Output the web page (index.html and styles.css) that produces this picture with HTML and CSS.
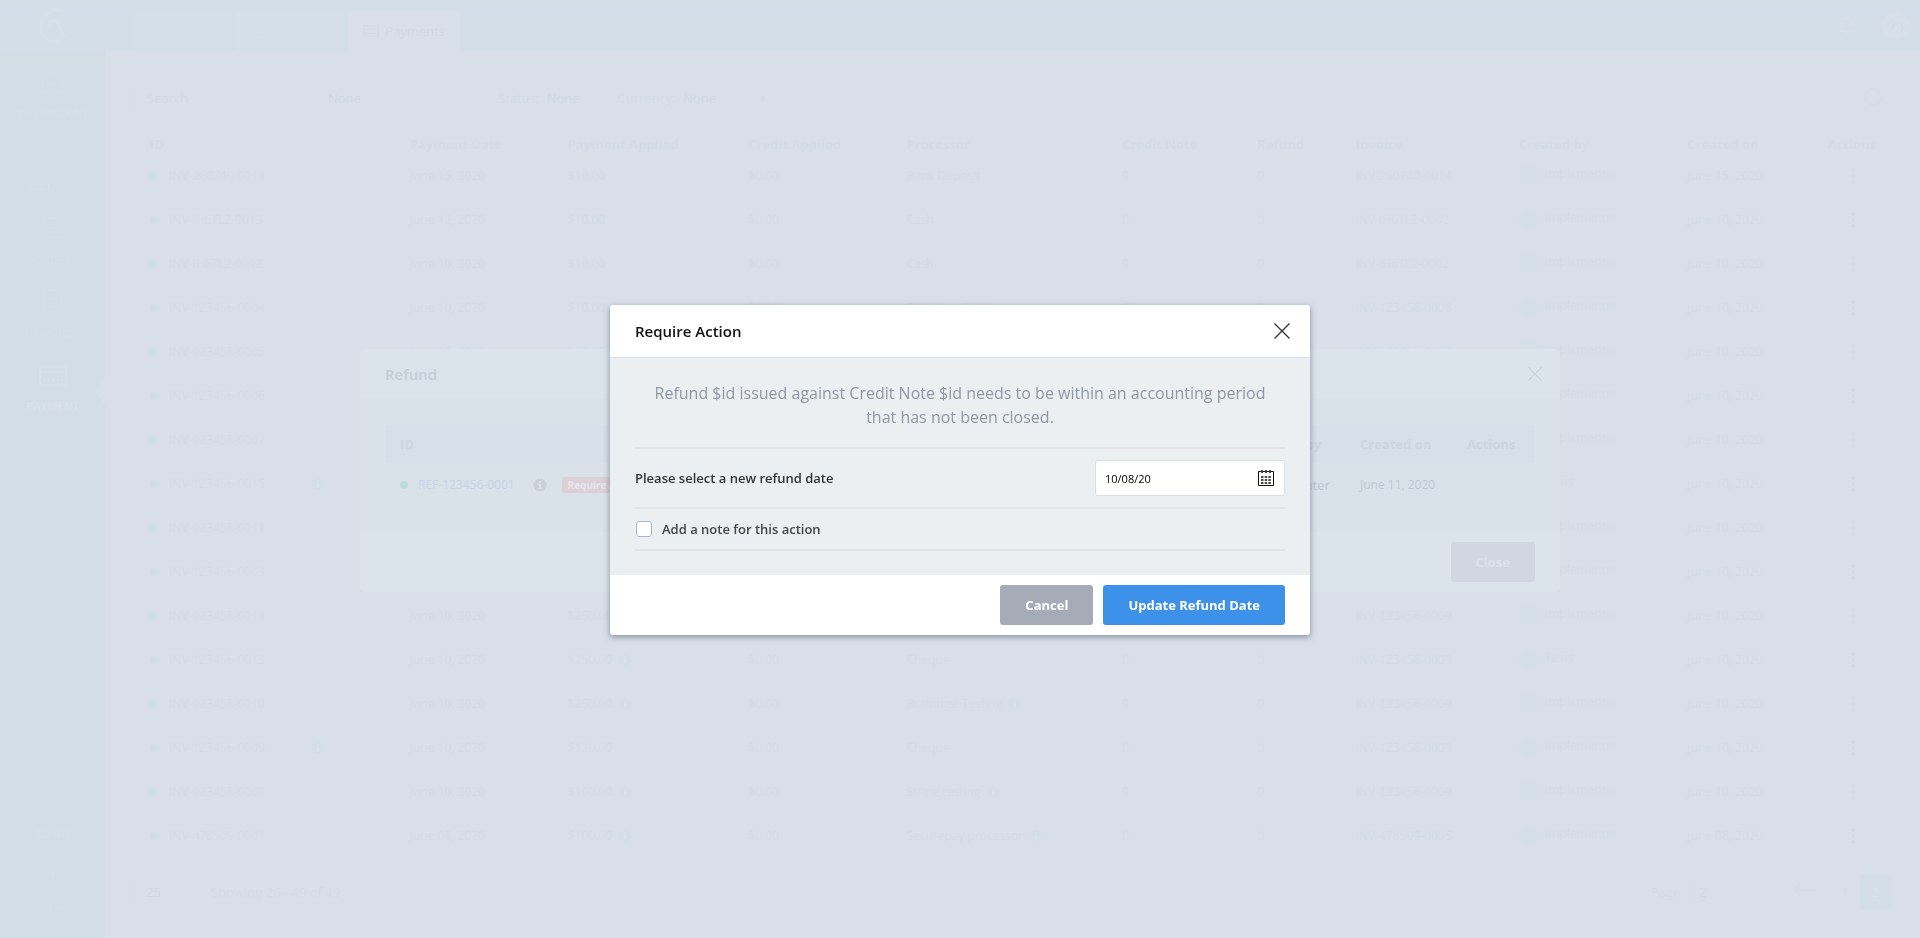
FILE: index.html
```html
<!DOCTYPE html>
<html lang="en">
<head>
  <meta charset="UTF-8">
  <title>Payments</title>
  <link rel="stylesheet" href="styles.css">
</head>
<body>
  <!-- Shared icons -->
  <svg class="sprite">
    <symbol id="info" viewBox="0 0 14 14">
      <circle cx="7" cy="7" r="6.5" fill="currentColor"/>
      <path class="cutout" d="M6 2.8h2.2v1.9H6zM5.1 5.7h3.1v4h.9v1.2H5.1V9.7H6V6.9h-.9z"/>
    </symbol>
    <symbol id="card" viewBox="0 0 28 20">
      <path d="M1 1h26v18H1zM1 6.500h26M4 14.500h20" fill="none" stroke="currentColor" stroke-width="1.500"/>
    </symbol>
    <symbol id="cross" viewBox="0 0 16 16">
      <path d="M.5.5l15 15M15.500.5l-15 15" fill="none" stroke="currentColor" stroke-width="1.300"/>
    </symbol>
    <symbol id="dots" viewBox="0 0 4 16">
      <circle cx="2" cy="2" r="1.200" fill="currentColor"/>
      <circle cx="2" cy="8" r="1.200" fill="currentColor"/>
      <circle cx="2" cy="14" r="1.200" fill="currentColor"/>
    </symbol>
  </svg>

  <div class="app">
    <header class="topbar">
      <a class="logo" href="#" aria-label="Home">
        <svg width="28" height="34" viewBox="0 0 28 34" fill="none" stroke="currentColor" stroke-width="2.500">
          <path d="M25 4C19-1 10 1 5 8 0 15 1 25 7 30c5 4 11 3 15 0M9 17c4-6 7-7 9-4l8 15"/>
        </svg>
      </a>
      <nav class="tabs">
        <a class="tab" href="#">
          <svg width="16" height="16" viewBox="0 0 16 16" fill="none" stroke="currentColor"><circle cx="8" cy="5" r="3"/><path d="M2 15c0-7 12-7 12 0"/></svg>
          C59107
        </a>
        <a class="tab" href="#">
          <svg width="16" height="16" viewBox="0 0 16 16" fill="none" stroke="currentColor"><path d="M3 1h7l3 3v11H3zM5 7h6M5 10h6"/></svg>
          S-123456
        </a>
        <a class="tab active" href="#">
          <svg width="16" height="12"><use href="#card"/></svg>
          Payments
        </a>
      </nav>
      <div class="top-actions">
        <svg width="18" height="20" viewBox="0 0 18 20" fill="none" stroke="currentColor" stroke-width="1.500">
          <path d="M1 15c3-2 2-6 3-9 2-5 8-5 10 0 1 3 0 7 3 9zM7 18h4"/>
        </svg>
        <svg width="30" height="30" viewBox="0 0 30 30">
          <circle cx="15" cy="15" r="14" fill="currentColor"/>
          <path d="M7 15l5-6 4 3-5 5M20 12l3 5-3 5" fill="none" stroke="#d2dce5" stroke-width="1.500"/>
        </svg>
      </div>
    </header>

    <div class="workspace">
      <aside class="sidebar">
        <a class="nav-item" href="#">
          <svg width="24" height="24" viewBox="0 0 24 24" fill="none" stroke="currentColor"><path d="M2 22V8l10-6 10 6v14h-7v-8H9v8z"/></svg>
          DASHBOARD
        </a>
        <a class="nav-item" href="#">
          <svg width="24" height="24" viewBox="0 0 24 24" fill="none" stroke="currentColor"><circle cx="12" cy="7" r="5"/><path d="M2 23c1-11 19-11 20 0"/></svg>
          ACCOUNT
        </a>
        <a class="nav-item" href="#">
          <svg width="24" height="24" viewBox="0 0 24 24" fill="none" stroke="currentColor"><path d="M3 2h18v6l-4 4H7L3 8zM3 16h18M4 21h16"/></svg>
          ORDER
        </a>
        <a class="nav-item" href="#">
          <svg width="24" height="24" viewBox="0 0 24 24" fill="none" stroke="currentColor"><path d="M3 1h13l5 5v17H3zM7 10h10M7 14h10M7 18h10"/></svg>
          INVOICE
        </a>
        <a class="nav-item current" href="#">
          <svg width="28" height="20" viewBox="0 0 28 20" fill="none" stroke="currentColor" stroke-width="1.500"><path d="M1 1h26v18H1zM1 6h26"/><path d="M4 14h20" stroke-width="2" stroke-dasharray="3 1.500"/></svg>
          PAYMENT
        </a>
        <a class="nav-item push" href="#">
          <svg width="24" height="24" viewBox="0 0 24 24"></svg>
          TO DO
        </a>
        <a class="nav-item" href="#">
          <svg width="26" height="26" viewBox="0 0 26 26" fill="none" stroke="currentColor"><circle cx="13" cy="13" r="12"/><path d="M13 7v12M7 13h12"/></svg>
          NEW
        </a>
      </aside>

      <main class="content">
        <div class="filters">
          <input class="filter search" type="text" placeholder="Search" aria-label="Search">
          <button class="filter wide"><b>None</b></button>
          <button class="filter">Status: <b>None</b></button>
          <button class="filter">Currency: <b>None</b></button>
          <button class="filter plus" aria-label="Add filter">+</button>
          <button class="refresh" aria-label="Refresh">
            <svg width="18" height="18" viewBox="0 0 18 18" fill="none" stroke="currentColor"><path d="M16 6a8 8 0 1 0 1 4M16 2v4h-4"/></svg>
          </button>
        </div>

        <table class="payments">
          <colgroup>
            <col class="c-id"><col class="c-date"><col class="c-amount"><col class="c-credit"><col class="c-processor"><col class="c-note">
            <col class="c-refund"><col class="c-invoice"><col class="c-by"><col class="c-on"><col class="c-actions">
          </colgroup>
          <thead>
            <tr><th>ID</th><th>Payment Date</th><th>Payment Applied</th><th>Credit Applied</th><th>Processor</th><th>Credit Note</th><th>Refund</th><th>Invoice</th><th>Created by</th><th>Created on</th><th>Actions</th></tr>
          </thead>
          <tbody>
            <tr><td><i class="dot"></i>INV-260740-0014</td><td>June 15, 2020</td><td>$10.00</td><td>$0.00</td><td>Bank Deposit</td><td>0</td><td>0</td><td>INV-260740-0014</td><td><i class="avatar"></i>Implementer</td><td>June 15, 2020</td><td class="menu"><svg width="4" height="16"><use href="#dots"/></svg></td></tr>
            <tr><td><i class="dot"></i>INV-IH6TL2-0013</td><td>June 12, 2020</td><td>$10.00</td><td>$0.00</td><td>Cash</td><td>0</td><td>0</td><td>INV-IH6TL2-0002</td><td><i class="avatar"></i>Implementer</td><td>June 10, 2020</td><td class="menu"><svg width="4" height="16"><use href="#dots"/></svg></td></tr>
            <tr><td><i class="dot"></i>INV-IH6TL2-0012</td><td>June 10, 2020</td><td>$10.00</td><td>$0.00</td><td>Cash</td><td>0</td><td>0</td><td>INV-IH6TL2-0002</td><td><i class="avatar"></i>Implementer</td><td>June 10, 2020</td><td class="menu"><svg width="4" height="16"><use href="#dots"/></svg></td></tr>
            <tr><td><i class="dot"></i>INV-123456-0004</td><td>June 10, 2020</td><td>$10.00</td><td>$0.00</td><td>Braintree Testing</td><td>0</td><td>0</td><td>INV-123456-0008</td><td><i class="avatar"></i>Implementer</td><td>June 10, 2020</td><td class="menu"><svg width="4" height="16"><use href="#dots"/></svg></td></tr>
            <tr><td><i class="dot"></i>INV-123456-0005</td><td>June 10, 2020</td><td>$10.00</td><td>$0.00</td><td>Cash</td><td>0</td><td>0</td><td>INV-123456-0008</td><td><i class="avatar"></i>Implementer</td><td>June 10, 2020</td><td class="menu"><svg width="4" height="16"><use href="#dots"/></svg></td></tr>
            <tr><td><i class="dot"></i>INV-123456-0006</td><td>June 10, 2020</td><td>$10.00</td><td>$0.00</td><td>Cash</td><td>0</td><td>0</td><td>INV-123456-0008</td><td><i class="avatar"></i>Implementer</td><td>June 10, 2020</td><td class="menu"><svg width="4" height="16"><use href="#dots"/></svg></td></tr>
            <tr><td><i class="dot"></i>INV-123456-0007</td><td>June 10, 2020</td><td>$10.00</td><td>$0.00</td><td>Cash</td><td>0</td><td>0</td><td>INV-123456-0008</td><td><i class="avatar"></i>Implementer</td><td>June 10, 2020</td><td class="menu"><svg width="4" height="16"><use href="#dots"/></svg></td></tr>
            <tr><td><i class="dot"></i>INV-123456-0015<svg class="hint far" width="12" height="12"><use href="#info"/></svg></td><td>June 10, 2020</td><td>$250.00</td><td>$0.00</td><td>Cash</td><td>0</td><td>0</td><td>INV-123456-0009</td><td><i class="avatar"></i>Tests</td><td>June 10, 2020</td><td class="menu"><svg width="4" height="16"><use href="#dots"/></svg></td></tr>
            <tr><td><i class="dot"></i>INV-123456-0011</td><td>June 10, 2020</td><td>$250.00</td><td>$0.00</td><td>Cheque</td><td>0</td><td>0</td><td>INV-123456-0009</td><td><i class="avatar"></i>Implementer</td><td>June 10, 2020</td><td class="menu"><svg width="4" height="16"><use href="#dots"/></svg></td></tr>
            <tr><td><i class="dot"></i>INV-123456-0003</td><td>June 10, 2020</td><td>$250.00</td><td>$0.00</td><td>Cheque</td><td>0</td><td>0</td><td>INV-123456-0009</td><td><i class="avatar"></i>Implementer</td><td>June 10, 2020</td><td class="menu"><svg width="4" height="16"><use href="#dots"/></svg></td></tr>
            <tr><td><i class="dot"></i>INV-123456-0014</td><td>June 10, 2020</td><td>$250.00</td><td>$0.00</td><td>Cheque</td><td>0</td><td>0</td><td>INV-123456-0009</td><td><i class="avatar"></i>Implementer</td><td>June 10, 2020</td><td class="menu"><svg width="4" height="16"><use href="#dots"/></svg></td></tr>
            <tr><td><i class="dot"></i>INV-123456-0013</td><td>June 10, 2020</td><td>$250.00<svg class="hint" width="12" height="12"><use href="#info"/></svg></td><td>$0.00</td><td>Cheque</td><td>0</td><td>0</td><td>INV-123456-0009</td><td><i class="avatar"></i>Tests</td><td>June 10, 2020</td><td class="menu"><svg width="4" height="16"><use href="#dots"/></svg></td></tr>
            <tr><td><i class="dot"></i>INV-123456-0010</td><td>June 10, 2020</td><td>$250.00<svg class="hint" width="12" height="12"><use href="#info"/></svg></td><td>$0.00</td><td>Braintree Testing<svg class="hint" width="12" height="12"><use href="#info"/></svg></td><td>0</td><td>0</td><td>INV-123456-0009</td><td><i class="avatar"></i>Implementer</td><td>June 10, 2020</td><td class="menu"><svg width="4" height="16"><use href="#dots"/></svg></td></tr>
            <tr><td><i class="dot"></i>INV-123456-0009<svg class="hint far" width="12" height="12"><use href="#info"/></svg></td><td>June 10, 2020</td><td>$120.00</td><td>$0.00</td><td>Cheque</td><td>0</td><td>0</td><td>INV-123456-0009</td><td><i class="avatar"></i>Implementer</td><td>June 10, 2020</td><td class="menu"><svg width="4" height="16"><use href="#dots"/></svg></td></tr>
            <tr><td><i class="dot"></i>INV-123456-0008</td><td>June 10, 2020</td><td>$100.00<svg class="hint" width="12" height="12"><use href="#info"/></svg></td><td>$0.00</td><td>Stripe testing<svg class="hint" width="12" height="12"><use href="#info"/></svg></td><td>0</td><td>0</td><td>INV-123456-0009</td><td><i class="avatar"></i>Implementer</td><td>June 10, 2020</td><td class="menu"><svg width="4" height="16"><use href="#dots"/></svg></td></tr>
            <tr><td><i class="dot"></i>INV-478509-0001</td><td>June 08, 2020</td><td>$100.00<svg class="hint" width="12" height="12"><use href="#info"/></svg></td><td>$0.00</td><td>Securepay processor<svg class="hint" width="12" height="12"><use href="#info"/></svg></td><td>0</td><td>0</td><td>INV-478509-0005</td><td><i class="avatar"></i>Implementer</td><td>June 08, 2020</td><td class="menu"><svg width="4" height="16"><use href="#dots"/></svg></td></tr>
          </tbody>
        </table>

        <div class="pager">
          <select class="page-select" aria-label="Rows per page"><option>25</option></select>
          <span>Showing 26 - 49 of 49</span>
          <label class="push-right" for="page">Page</label>
          <select class="page-select" id="page"><option>2</option></select>
          <div class="page-links">
            <button class="page-btn arrow" aria-label="Previous page">
              <svg width="24" height="16" viewBox="0 0 24 16" fill="none" stroke="currentColor"><path d="M24 8H1M8 1L1 8l7 7"/></svg>
            </button>
            <button class="page-btn">1</button>
            <button class="page-btn on">2</button>
          </div>
        </div>
      </main>
    </div>
  </div>

  <!-- Refund dialog, behind the active one -->
  <div class="overlay">
    <section class="refund">
      <header class="refund-head">
        <h2>Refund</h2>
        <button class="close-x" aria-label="Close refund"><svg width="14" height="14"><use href="#cross"/></svg></button>
      </header>
      <div class="refund-body">
        <table class="refund-table">
          <colgroup><col><col class="r-by"><col class="r-on"><col class="r-actions"></colgroup>
          <thead>
            <tr><th>ID</th><th>Created by</th><th>Created on</th><th>Actions</th></tr>
          </thead>
          <tbody>
            <tr>
              <td>
                <div class="refund-id">
                  <i class="dot"></i>
                  <a href="#">REF-123456-0001</a>
                  <svg class="refund-info" width="14" height="14"><use href="#info"/></svg>
                  <span class="badge">Require Action</span>
                </div>
              </td>
              <td class="creator">Implementer</td>
              <td>June 11, 2020</td>
              <td></td>
            </tr>
          </tbody>
        </table>
      </div>
      <footer class="refund-foot">
        <button class="btn btn-close">Close</button>
      </footer>
    </section>
  </div>

  <!-- Active dialog -->
  <div class="overlay">
    <section class="modal" role="dialog" aria-labelledby="modalTitle">
      <header class="modal-head">
        <h2 id="modalTitle">Require Action</h2>
        <button class="close-x" aria-label="Close"><svg width="16" height="16"><use href="#cross"/></svg></button>
      </header>
      <div class="modal-body">
        <p class="message">Refund $id issued against Credit Note $id needs to be within an accounting period that has not been closed.</p>
        <div class="row date-row">
          <label for="refundDate">Please select a new refund date</label>
          <div class="date-box">
            <input id="refundDate" type="text" value="10/08/20">
            <svg width="16" height="16" viewBox="0 0 16 16">
              <path d="M.5 1.500h15v14H.5z" fill="none" stroke="#111" stroke-linejoin="round"/>
              <path d="M4 0v3M8 0v3M12 0v3" stroke="#444" stroke-width="2"/>
              <path d="M3 7h10M3 10h10M3 13h10" stroke="#111" stroke-width="1.500" stroke-dasharray="2.500 1.200"/>
            </svg>
          </div>
        </div>
        <div class="row note-row">
          <input id="addNote" type="checkbox">
          <label for="addNote">Add a note for this action</label>
        </div>
      </div>
      <footer class="modal-foot">
        <button class="btn btn-cancel">Cancel</button>
        <button class="btn btn-update">Update Refund Date</button>
      </footer>
    </section>
  </div>
</body>
</html>
```

FILE: styles.css
```css
* {
  box-sizing: border-box;
}

body {
  margin: 0;
  font-family: "Open Sans", "Noto Sans", sans-serif;
  font-size: 13px;
  color: #d3dce6;
  background-color: #d8dfe9;
}

a {
  color: inherit;
  text-decoration: none;
}

button,
input,
select {
  font: inherit;
  color: inherit;
}

h2 {
  margin: 0;
  font-size: 15px;
  font-weight: 600;
}

.sprite {
  display: none;
}

/* Page behind the dialogs */
.app {
  min-height: 100vh;
  display: flex;
  flex-direction: column;
}

.topbar {
  height: 51px;
  display: flex;
  background-color: #d4dee8;
  border-top: 1px solid #d4dfe4;
}

.logo {
  width: 105px;
  display: flex;
  align-items: center;
  justify-content: center;
  color: #d7e0e9;
}

.tabs {
  display: flex;
  align-items: flex-end;
  gap: 4px;
  padding-left: 30px;
}

.tab {
  height: 40px;
  display: flex;
  align-items: center;
  gap: 6px;
  padding: 0 15px;
  border-radius: 3px 3px 0 0;
  background-color: #d4dfe8;
  color: #d6e0e9;
}

.tab.active {
  background-color: #d8dfe9;
  color: #d0dae3;
}

.top-actions {
  margin-left: auto;
  display: flex;
  align-items: center;
  gap: 24px;
  padding-right: 10px;
  color: #d7dfe9;
}

.workspace {
  flex: 1;
  display: flex;
}

.sidebar {
  width: 105px;
  display: flex;
  flex-direction: column;
  padding: 10px 0 11px;
  background-color: #d3dde6;
}

.nav-item {
  position: relative;
  height: 73px;
  display: flex;
  flex-direction: column;
  align-items: center;
  justify-content: flex-end;
  gap: 12px;
  padding-bottom: 12px;
  font-size: 11px;
  font-weight: 700;
  line-height: 16px;
  color: #d5dfe7;
}

.nav-item.current {
  color: #d8e1ea;
}

.nav-item.current::after {
  content: "";
  position: absolute;
  right: 0;
  top: 24px;
  border: 14px solid transparent;
  border-left-width: 0;
  border-right: 10px solid #d8dfe9;
}

.push {
  margin-top: auto;
}

.content {
  flex: 1;
  display: flex;
  flex-direction: column;
  padding: 32px 30px 28px;
}

.filters {
  display: flex;
  gap: 6px;
  padding-bottom: 22px;
}

.filter {
  height: 30px;
  padding: 0 6px;
  border: 1px solid #d6dee8;
  border-bottom-color: #dae1ea;
  background-color: transparent;
  text-align: left;
}

.filter::placeholder {
  color: #d2dbe5;
  opacity: 1;
}

.filter b {
  font-weight: 400;
  color: #d0dae3;
  padding: 0 18px 0 4px;
}

.search {
  width: 164px;
  padding-left: 11px;
}

.wide {
  width: 180px;
  padding-left: 18px;
}

.plus {
  padding-left: 11px;
}

.refresh {
  margin-left: auto;
  padding: 0 8px;
  border: 0;
  background: none;
}

.payments {
  width: 100%;
  table-layout: fixed;
  border-collapse: collapse;
}

.payments th,
.payments td {
  padding: 0 0 0 15px;
  text-align: left;
  white-space: nowrap;
}

.payments th {
  height: 18px;
  line-height: 18px;
  font-weight: 700;
}

.payments td {
  height: 44px;
  font-size: 12px;
}

.payments .menu {
  padding-left: 38px;
}

.payments td svg,
.payments td i {
  vertical-align: middle;
}

.c-id { width: 14.8%; }
.c-date { width: 9%; }
.c-amount { width: 10.3%; }
.c-credit { width: 9%; }
.c-processor { width: 12.3%; }
.c-note { width: 7.7%; }
.c-refund { width: 5.6%; }
.c-invoice { width: 9.3%; }
.c-by { width: 9.6%; }
.c-on { width: 8%; }
.c-actions { width: 4.4%; }

.dot {
  display: inline-block;
  width: 8px;
  height: 8px;
  margin-right: 11px;
  border-radius: 50%;
  background-color: #cedfe7;
}

.avatar {
  display: inline-block;
  width: 20px;
  height: 20px;
  margin-right: 6px;
  border-radius: 50%;
  background-color: #d4dfe8;
}

.hint {
  margin-left: 7px;
  color: #d4dee8;
}

.hint.far {
  margin-left: 47px;
}

.cutout {
  fill: #dbe3ea;
}

.pager {
  display: flex;
  align-items: center;
  gap: 8px;
  margin-top: auto;
}

.page-select {
  width: 68px;
  height: 36px;
  padding: 0 10px;
  appearance: none;
  border: 1px solid #d6dfe9;
  background-color: transparent;
  color: #d0dae3;
}

.push-right {
  margin-left: auto;
}

.page-links {
  display: flex;
  margin-left: 16px;
}

.page-btn {
  width: 30px;
  height: 36px;
  padding: 0;
  border: 0;
  border-radius: 3px;
  background: none;
}

.page-btn.arrow {
  width: 50px;
}

.page-btn.on {
  background-color: #d3dee8;
  color: #d9e2eb;
}

/* Dialog layers */
.overlay {
  position: fixed;
  inset: 2px 0 0;
  display: flex;
  align-items: center;
  justify-content: center;
}

.close-x {
  display: flex;
  padding: 0;
  border: 0;
  background: none;
  cursor: pointer;
}

.btn {
  height: 40px;
  padding: 0 25px;
  border: 0;
  border-radius: 3px;
  font-weight: 700;
  color: #fff;
  cursor: pointer;
}

/* Refund dialog */
.refund {
  width: 1200px;
  max-width: 100%;
  border-radius: 4px;
  background-color: #dbe3eb;
}

.refund-head {
  height: 51px;
  display: flex;
  align-items: center;
  justify-content: space-between;
  padding: 0 18px 0 25px;
  border-bottom: 1px solid #d8e0e8;
  color: #cbd3dc;
}

.refund-head h2 {
  color: #c5cdd6;
}

.refund-body {
  padding: 25px;
  background-color: #d9e1e9;
}

.refund-table {
  width: 100%;
  table-layout: fixed;
  border-collapse: collapse;
}

.refund-table th,
.refund-table td {
  padding: 0 15px;
  text-align: left;
}

.refund-table th {
  height: 38px;
  background-color: #d7dfe9;
  font-weight: 700;
  color: #ced6e0;
}

.refund-table td {
  height: 44px;
  font-size: 12px;
  color: #c0c9d2;
}

.refund-table .creator {
  font-size: 13px;
}

.refund-id {
  display: flex;
  align-items: center;
}

.refund-id .dot {
  margin-right: 10px;
  background-color: #bcdddb;
}

.refund-id a {
  color: #c2d5e9;
}

.refund-info {
  margin: 0 15px 0 18px;
  color: #c9d0d8;
}

.badge {
  padding: 0 6px;
  border-radius: 3px;
  background-color: #dccfd6;
  color: #e3e7ed;
  font-size: 10px;
  font-weight: 700;
  line-height: 16px;
}

.r-by { width: 109px; }
.r-on { width: 107px; }
.r-actions { width: 83px; }

.refund-foot {
  display: flex;
  justify-content: flex-end;
  padding: 10px 25px;
}

.btn-close {
  background-color: #d0d7e1;
  color: #dbe2ea;
}

/* Require Action dialog */
.modal {
  width: 700px;
  max-width: 100%;
  border-radius: 3px;
  background-color: #fff;
  box-shadow: 0 2px 6px rgba(50, 65, 80, 0.5);
}

.modal-head {
  height: 53px;
  display: flex;
  align-items: center;
  justify-content: space-between;
  padding: 0 20px 0 25px;
  border-bottom: 1px solid #dce0e5;
  color: #333;
}

.modal-head h2 {
  color: #111;
}

.modal-body {
  padding: 23px 25px 24px;
  background-color: #ebeff2;
}

.message {
  margin: 0;
  padding: 0 10px 18px;
  border-bottom: 2px solid #e1e5e7;
  font-size: 16px;
  line-height: 24px;
  text-align: center;
  color: #8f98a4;
}

.row {
  display: flex;
  align-items: center;
  border-bottom: 2px solid #e1e5e7;
  font-weight: 600;
  color: #333;
}

.date-row {
  justify-content: space-between;
  height: 60px;
}

.date-box {
  width: 190px;
  height: 36px;
  display: flex;
  align-items: center;
  padding: 0 10px 0 9px;
  border: 1px solid #dcdfe3;
  border-radius: 3px;
  background-color: #fff;
}

.date-box input {
  flex: 1;
  min-width: 0;
  padding: 0;
  border: 0;
  outline: none;
  font-size: 11px;
  font-weight: 400;
  color: #000;
}

.note-row {
  height: 42px;
  gap: 10px;
  color: #444;
}

.note-row input {
  appearance: none;
  width: 16px;
  height: 16px;
  margin: 0 0 0 1px;
  border: 1px solid #abb5c9;
  border-radius: 3px;
  background-color: #fff;
}

.modal-foot {
  display: flex;
  justify-content: flex-end;
  gap: 10px;
  padding: 10px 25px;
}

.btn-cancel {
  background-color: #a6abb8;
}

.btn-update {
  background-color: #3d91e8;
}
```
